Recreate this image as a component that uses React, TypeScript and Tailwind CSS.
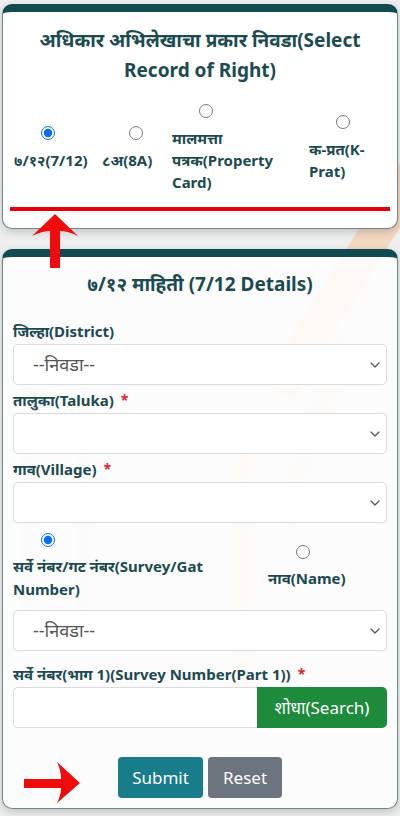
import React, { useState } from 'react';

const font = { fontFamily: '"Noto Sans", "Noto Sans Devanagari", Inter, sans-serif' };

const Chevron = () => (
  <svg width="10" height="6" viewBox="0 0 10 6" className="shrink-0">
    <path d="M1 1l4 4 4-4" fill="none" stroke="#555" strokeWidth="1.2" strokeLinecap="round" strokeLinejoin="round" />
  </svg>
);

const SelectBox = ({ value }: { value?: string }) => (
  <div className="mt-[2px] h-[41px] w-full rounded-[5px] border border-[#d9dcdf] bg-white flex items-center justify-between pl-[19px] pr-[6px]">
    <span className="text-[18px] text-[#555]">{value}</span>
    <Chevron />
  </div>
);

const Label = ({ text, required, gap = 'mt-[5px]' }: { text: string; required?: boolean; gap?: string }) => (
  <div className={`${gap} h-[22px] leading-[22px] text-[15px] font-bold text-[#1b4a50]`}>
    {text}
    {required && <span className="ml-[7px] text-[#e0262f] text-[14px] align-top">*</span>}
  </div>
);

const Radio = ({ checked, onChange }: { checked: boolean; onChange: () => void }) => (
  <input
    type="radio"
    checked={checked}
    onChange={onChange}
    className="ml-[27px] mb-[9px] w-[14px] h-[14px] m-0 accent-[#0a6cf5]"
  />
);

const UpArrow = () => (
  <svg width="46" height="55" viewBox="0 0 46 55" className="absolute left-[32px] top-[214px] z-20">
    <path d="M23 0 L46 22 Q36 17 28 17 L28 54 L18 54 L18 17 Q10 17 0 22 Z" fill="#ee0c0c" />
  </svg>
);

const RightArrow = () => (
  <svg width="57" height="42" viewBox="0 0 57 42" className="absolute left-[24px] top-[762px] z-20">
    <path d="M0 17 L37 17 Q37 8 33 0 L56 21 L33 41 Q37 33 37 26 L0 26 Z" fill="#ee0c0c" />
  </svg>
);

export default function App() {
  const [record, setRecord] = useState('712');
  const [mode, setMode] = useState('survey');

  return (
    <div className="relative w-[400px] h-[816px] overflow-hidden bg-[#eeeeee]" style={font}>
      {/* watermark */}
      <div className="absolute inset-0 pointer-events-none">
        <div className="absolute left-[330px] top-[150px] w-[34px] h-[260px] bg-[#f6c9a3] opacity-60 rotate-[32deg]" />
        <div className="absolute left-[300px] top-[330px] w-[26px] h-[200px] bg-[#f6c9a3] opacity-30 rotate-[20deg]" />
        <div className="absolute left-[234px] top-[440px] w-[20px] h-[290px] bg-[#f6c9a3] opacity-40" />
        <div className="absolute left-[20px] top-[330px] w-[70px] h-[320px] rounded-full border-[14px] border-[#d8d8d8] opacity-40" />
      </div>

      <UpArrow />
      <RightArrow />

      <div className="relative flex flex-col gap-[20px] pt-[4px] px-[2px]">
        {/* Record type card */}
        <div className="rounded-[10px] border border-[#6e878a] border-t-[8px] border-t-[#124a51] bg-white shadow-[0_3px_8px_rgba(0,0,0,0.18)] px-[7px] pb-[17px]">
          <h2 className="pt-[13px] text-center text-[19px] font-bold leading-[30px] text-[#1a4b51]">
            अधिकार अभिलेखाचा प्रकार निवडा(Select
            <br />
            Record of Right)
          </h2>
          <div className="mt-[19px] flex items-center text-[15px] font-bold leading-[22px] text-[#1b4a50]">
            <label className="w-[92px] flex flex-col pl-[4px]">
              <Radio checked={record === '712'} onChange={() => setRecord('712')} />
              <span>७/१२(7/12)</span>
            </label>
            <label className="w-[70px] flex flex-col">
              <Radio checked={record === '8a'} onChange={() => setRecord('8a')} />
              <span>८अ(8A)</span>
            </label>
            <label className="w-[137px] flex flex-col">
              <Radio checked={record === 'prop'} onChange={() => setRecord('prop')} />
              <span>
                मालमत्ता
                <br />
                पत्रक(Property
                <br />
                Card)
              </span>
            </label>
            <label className="flex-1 flex flex-col">
              <Radio checked={record === 'kp'} onChange={() => setRecord('kp')} />
              <span>
                क-प्रत(K-
                <br />
                Prat)
              </span>
            </label>
          </div>
          <div className="mt-[14px] h-[4px] bg-[#e8000b]" />
        </div>

        {/* 7/12 details card */}
        <div className="rounded-[10px] border border-[#6e878a] border-t-[8px] border-t-[#124a51] bg-white/85 shadow-[0_3px_8px_rgba(0,0,0,0.18)] px-[10px] pb-[10px]">
          <h3 className="pt-[13px] text-center text-[19px] font-bold leading-[28px] text-[#1a4b51]">
            ७/१२ माहिती (7/12 Details)
          </h3>
          <div className="mt-[22px]">
            <Label text="जिल्हा(District)" />
            <SelectBox value="--निवडा--" />
            <Label text="तालुका(Taluka)" required gap="mt-[4px]" />
            <SelectBox />
            <Label text="गाव(Village)" required gap="mt-[4px]" />
            <SelectBox />
          </div>

          <div className="mt-[10px] flex items-center text-[15px] font-bold leading-[23px] text-[#1b4a50]">
            <label className="w-[255px] flex flex-col">
              <input
                type="radio"
                checked={mode === 'survey'}
                onChange={() => setMode('survey')}
                className="ml-[28px] mb-[8px] w-[14px] h-[14px] m-0 accent-[#0a6cf5]"
              />
              <span>
                सर्वे नंबर/गट नंबर(Survey/Gat
                <br />
                Number)
              </span>
            </label>
            <label className="flex-1 flex flex-col">
              <input
                type="radio"
                checked={mode === 'name'}
                onChange={() => setMode('name')}
                className="ml-[28px] mb-[8px] w-[14px] h-[14px] m-0 accent-[#0a6cf5]"
              />
              <span>नाव(Name)</span>
            </label>
          </div>

          <div className="mt-[9px]">
            <SelectBox value="--निवडा--" />
          </div>

          <Label text="सर्वे नंबर(भाग 1)(Survey Number(Part 1))" required gap="mt-[12px]" />
          <div className="mt-[2px] flex h-[41px]">
            <input className="flex-1 min-w-0 rounded-l-[5px] border border-r-0 border-[#d9dcdf] bg-white outline-none px-3" />
            <button className="w-[130px] rounded-r-[5px] bg-[#1e8a3c] text-white text-[17px]">शोधा(Search)</button>
          </div>

          <div className="mt-[29px] flex justify-center gap-[5px]">
            <button className="h-[41px] w-[85px] rounded-[4px] bg-[#187c8a] text-white text-[17px]">Submit</button>
            <button className="h-[41px] w-[74px] rounded-[4px] bg-[#6c757d] text-white text-[17px]">Reset</button>
          </div>
        </div>
      </div>
    </div>
  );
}
